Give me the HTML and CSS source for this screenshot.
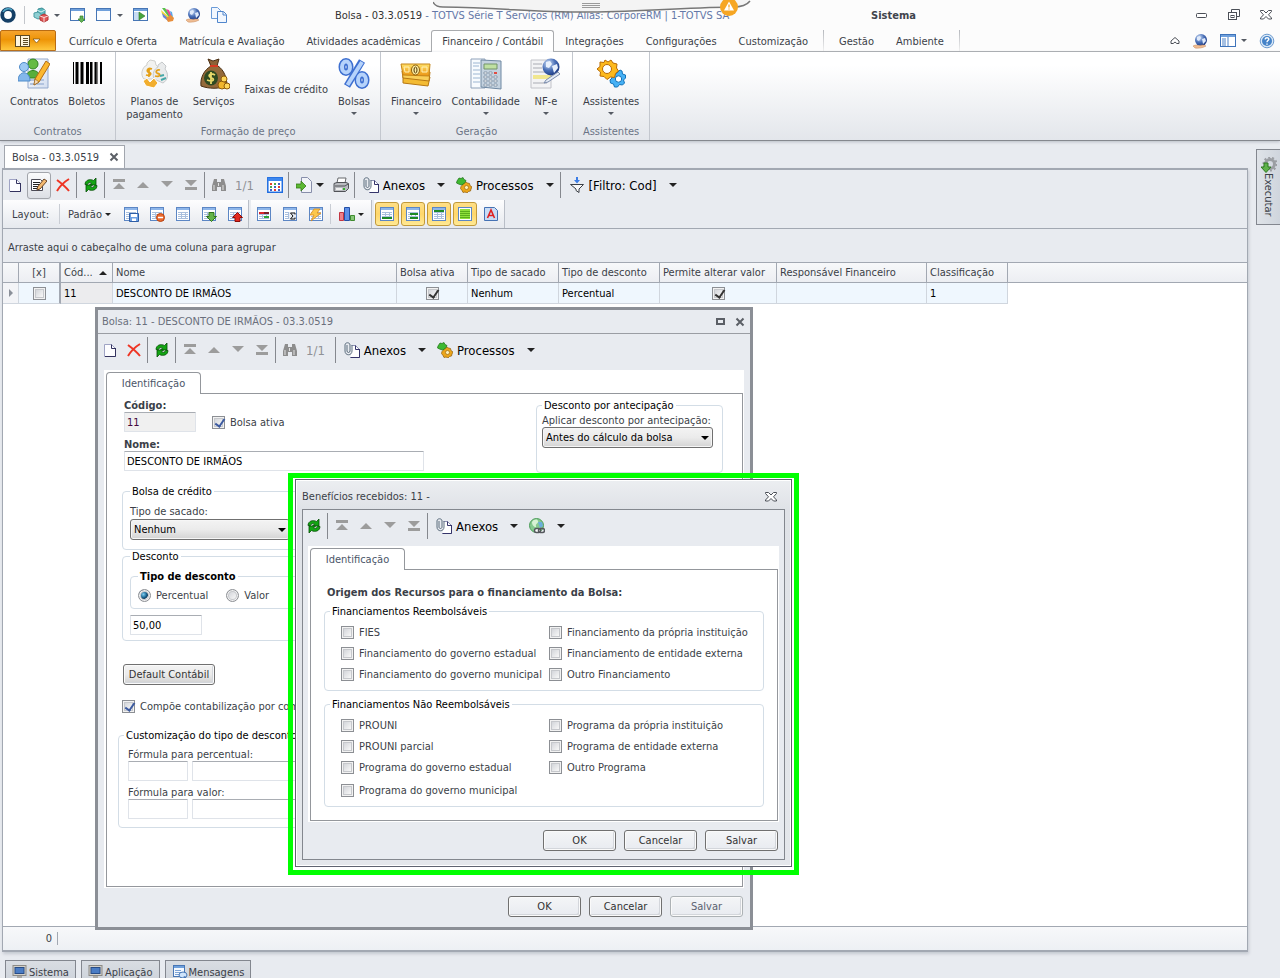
FILE: index.html
```html
<!DOCTYPE html>
<html lang="pt-BR">
<head>
    <meta charset="UTF-8">
    <meta name="viewport" content="width=device-width, initial-scale=1.0">
    <title>Bolsa - 03.3.0519</title>
    <link rel="stylesheet" href="styles.css">
</head>
<body>
    <!-- icon sprite -->
    <svg class="sprite" aria-hidden="true">
        <defs>
            <linearGradient id="g-blue" x1="0" y1="0" x2="0" y2="1"><stop offset="0" stop-color="#b9d4f7"/><stop offset="1" stop-color="#3d74cf"/></linearGradient>
            <linearGradient id="g-gold" x1="0" y1="0" x2="0" y2="1"><stop offset="0" stop-color="#ffe067"/><stop offset="1" stop-color="#eb9412"/></linearGradient>
            <linearGradient id="g-sheet" x1="0" y1="0" x2="1" y2="1"><stop offset="0" stop-color="#ffffff"/><stop offset="1" stop-color="#d3def0"/></linearGradient>
            <radialGradient id="g-globe" cx=".35" cy=".3" r=".8"><stop offset="0" stop-color="#d7e6fa"/><stop offset=".5" stop-color="#4a70b8"/><stop offset="1" stop-color="#142f78"/></radialGradient>
        </defs>
        <symbol id="i-logo" viewBox="0 0 16 16"><circle cx="8" cy="8" r="5.800" fill="#fff" stroke="#153f66" stroke-width="3.800"/><path d="M3 5a6 6 0 0 1 9-2" fill="none" stroke="#4fa5c4" stroke-width="1.600"/></symbol>
        <symbol id="i-cubes" viewBox="0 0 16 16"><path d="M5 2l4-1 3 2v4L8 9 4 7z" fill="#5bb7bd" stroke="#3d8e95"/><path d="M1 6l4-1 3 2v4l-3 1-4-2z" fill="#8fcfd2" stroke="#4a9ca2"/><path d="M7 9l4-2 4 2v4l-4 2-4-2z" fill="#e05656" stroke="#b63333"/><path d="M7 9l4 1.500L15 9M11 10.500V15M4 3l4 2 4-2" fill="none" stroke="#fff" stroke-width=".8"/></symbol>
        <symbol id="i-winadd" viewBox="0 0 16 16"><rect x=".5" y="1.500" width="14" height="12" fill="#fff" stroke="#4776b5"/><path d="M1 2h13v2H1z" fill="#6fa0dc"/><path d="M10 9h3v3h2l-3.500 3.500L8 12h2z" fill="#61b254" stroke="#35802c" stroke-width=".7"/></symbol>
        <symbol id="i-win" viewBox="0 0 16 16"><rect x=".5" y="1.500" width="14" height="12" fill="#fbfdff" stroke="#4776b5"/><path d="M1 2h13v2H1z" fill="#6fa0dc"/></symbol>
        <symbol id="i-wingo" viewBox="0 0 16 16"><rect x=".5" y="1.500" width="14" height="12" fill="#fff" stroke="#4776b5"/><path d="M1 2h13v2H1z" fill="#6fa0dc"/><path d="M1 5h5v8H1z" fill="#c7dcf3"/><path d="M6 5l6 4-6 4z" fill="#48a63f" stroke="#2b7625" stroke-width=".6"/></symbol>
        <symbol id="i-palette" viewBox="0 0 16 16"><path d="M3 1l3 0 7 9-2 2z" fill="#5ac04e"/><path d="M7 2l3 1 3 6-2 1z" fill="#e8479c"/><path d="M11 4l2 1 1 5-2-1z" fill="#57a8e6"/><path d="M2 3l9 8-2 2-6-6z" fill="#f6d736"/><path d="M3 6l7 6-1 2-5-4z" fill="#6b84d8"/><path d="M7 11l5-3 3 3-1 3-5 1z" fill="#e88e3a"/></symbol>
        <symbol id="i-globe" viewBox="0 0 16 16"><circle cx="9" cy="7" r="6" fill="url(#g-globe)"/><path d="M5 4l3-1 1 2-2 3-2-1zM10 6l3-1 1 3-3 3z" fill="#dfeafb"/><path d="M1 13c3-2 5 0 7-.5s4-1 6 .5c-3 2-8 2.500-11 2z" fill="#f0bd93" stroke="#c78a5d" stroke-width=".5"/></symbol>
        <symbol id="i-copy" viewBox="0 0 16 16"><path d="M.5.5h6l3 3v8h-9z" fill="#f2f7fe" stroke="#6a9bd8"/><path d="M6.500 4.500h6l3 3v8h-9z" fill="#f2f7fe" stroke="#5086cc"/><path d="M12 5v3h3" fill="none" stroke="#5086cc"/></symbol>
        <symbol id="i-panel" viewBox="0 0 16 14"><rect x=".5" y=".5" width="15" height="12" fill="#fff" stroke="#3e73ba"/><path d="M1 1h14v2H1z" fill="#6fa0dc"/><path d="M8 3v9M2 5h4M2 7h4M2 9h4M2 11h4" stroke="#4f82c6"/></symbol>
        <symbol id="i-help" viewBox="0 0 16 16"><circle cx="8" cy="8" r="6.800" fill="#dbe9f7" stroke="#6d9bcf"/><circle cx="8" cy="8" r="5" fill="#4583c8"/><path d="M6.200 6.500c0-2.500 3.800-2.200 3.600-.2C9.600 7.500 8 7.700 8 9.200M8 10.500v1.300" stroke="#fff" stroke-width="1.400" fill="none"/></symbol>
        <symbol id="i-min" viewBox="0 0 12 12"><rect x=".5" y="4.500" width="10" height="4" rx="1" fill="#fff" stroke="#4b4f57"/></symbol>
        <symbol id="i-restore" viewBox="0 0 12 12"><path d="M3.500 3.500v-3h8v7h-3" fill="#fff" stroke="#4b4f57"/><rect x=".5" y="3.500" width="8" height="7" fill="#fff" stroke="#4b4f57"/><rect x="3" y="6.500" width="3" height="2" fill="none" stroke="#4b4f57"/></symbol>
        <symbol id="i-close" viewBox="0 0 12 12"><path d="M.5 1.500h3L6 4l2.500-2.500h3v1L8.500 5.800l3 3.200v1h-3L6 7.500 3.500 10h-3V9l3-3.200-3-3.300z" fill="#fff" stroke="#4b4f57"/></symbol>
        <symbol id="i-x" viewBox="0 0 10 10"><path d="M1.500 1.500l7 7M8.500 1.500l-7 7" stroke="#5b5f66" stroke-width="2"/></symbol>
        <symbol id="i-max" viewBox="0 0 10 10"><rect x="1" y="2" width="7" height="5" fill="none" stroke="#5b5f66" stroke-width="2"/></symbol>
        <symbol id="i-up" viewBox="0 0 10 8"><path d="M1 4l4-3.500L9 4v2.500H6.800L5 5 3.200 6.500H1z" fill="#fff" stroke="#4b4f57"/></symbol>
        <symbol id="i-menu" viewBox="0 0 26 14"><rect x=".5" y="1.500" width="14" height="11" fill="#fff6dd" stroke="#5d4a24"/><path d="M5.500 2v10M8 4.500h5M8 6.500h5M8 8.500h5M8 10.500h5" stroke="#5d4a24"/><path d="M18 5h7l-3.500 4z" fill="#fff" stroke="#7a4d08" stroke-width=".7"/></symbol>

        <symbol id="i-contratos" viewBox="0 0 32 32"><path d="M10 1h20v29H10z" fill="url(#g-sheet)" stroke="#93a9cd"/><path d="M12 22h14M12 26h14" stroke="#b1c3df" stroke-width="2"/><circle cx="15" cy="6" r="5" fill="#65bb45" stroke="#2f8420"/><path d="M8 20c0-10 14-10 14 0z" fill="#58ae3b" stroke="#2f8420"/><circle cx="6" cy="9" r="4.500" fill="#9cc9f3" stroke="#4f8bc9"/><path d="M0 23c0-11 12-11 12 0z" fill="#83b7ec" stroke="#4f8bc9"/><path d="M28 3l4 3-11 18-5 3 1-6z" fill="#fbb72f" stroke="#b26c14"/><path d="M17 21l4 3-5 3z" fill="#f7dcb5" stroke="#8a5a1d" stroke-width=".6"/></symbol>
        <symbol id="i-barcode" viewBox="0 0 32 24"><path d="M2.500 0v22M21 0v22M26 0v22" stroke="#000"/><path d="M6 0v22M11 0v22M16.500 0v22" stroke="#000" stroke-width="3"/><path d="M20 0v22M24.500 0v22M30 0v22" stroke="#000" stroke-width="2"/></symbol>
        <symbol id="i-planos" viewBox="0 0 32 32"><path d="M9 5l3-3 5 1 1 4c5 4 5 11 2 14H6C2 17 4 9 9 7z" fill="#f2f2f0" stroke="#cfcfcc"/><path d="M20 7l4-3 4 4-1 3c4 5 3 11-2 14l-9-4c-2-5 0-10 4-12z" fill="#e9ebec" stroke="#c5c8ca"/><path d="M14 11c-5-2-6 3-3 3.500s2 4-3 2.500M11 10v9M22 12c-4-1-5 3-2 3.500s2 4-3 2.500" fill="none" stroke="#e5a017" stroke-width="1.800"/><path d="M5 23l4-3 3 4 4-4 4 5-4 5-8-2z" fill="#f2ae2e" stroke="#fff"/><path d="M22 18l4-1M23 22l5-2" stroke="#47a8a8" stroke-width="2"/></symbol>
        <symbol id="i-saco" viewBox="0 0 32 32"><path d="M10 1l5 2 6-2-2 7h-6z" fill="#8d6236" stroke="#4a2f14"/><path d="M13 8h7c6 4 9 12 9 20-8 3-18 3-26 0C2 20 6 12 13 8z" fill="#946a3a" stroke="#4a2f14"/><path d="M12 8h8" stroke="#d63a20" stroke-width="2"/><ellipse cx="13" cy="20" rx="7" ry="7.500" fill="#2f4a22"/><path d="M17 17c-5-3-8 1-4 2.500s3 5-4 2.500M13 14v12" fill="none" stroke="#e9d96a" stroke-width="1.800"/><circle cx="24" cy="27" r="4" fill="#f2b62c" stroke="#8f5c0a"/><circle cx="29" cy="28" r="3" fill="#ffd75a" stroke="#8f5c0a"/><circle cx="26" cy="21" r="3" fill="#ffd75a" stroke="#8f5c0a"/></symbol>
        <symbol id="i-percent" viewBox="0 0 32 32"><g fill="none" stroke="#3d6fd0" stroke-width="7"><ellipse cx="8" cy="9" rx="4" ry="5.500"/><ellipse cx="24" cy="22" rx="4" ry="5.500"/><path d="M24 3L9 28"/></g><g fill="none" stroke="#b6d3fb" stroke-width="4"><ellipse cx="8" cy="9" rx="4" ry="5.500"/><ellipse cx="24" cy="22" rx="4" ry="5.500"/><path d="M24 4L9.500 27"/></g></symbol>
        <symbol id="i-notas" viewBox="0 0 32 32"><path d="M3 18l27 1-2 9-25-3z" fill="#f3bb33" stroke="#b77813"/><path d="M2 13l28 1-1 9-26-3z" fill="#f9cf58" stroke="#b77813"/><path d="M1 6h29l-1 12-26-1z" fill="url(#g-gold)" stroke="#c58518"/><ellipse cx="15.500" cy="12" rx="4" ry="5" fill="#ffefa1" stroke="#8e5f0c"/><ellipse cx="15.500" cy="12" rx="1.500" ry="3" fill="none" stroke="#4e350a"/><path d="M4 9h5v5H5zM22 9h5v5h-5z" fill="none" stroke="#fff1b5"/></symbol>
        <symbol id="i-calc" viewBox="0 0 32 32"><path d="M1 1h14v29H1z" fill="#f8fbfe" stroke="#8fa2ba"/><path d="M3 5h7M3 8h6M3 12h7M3 16h7M3 20h7M3 24h7" stroke="#9db6d2"/><path d="M11 2l20 1v28l-20-2z" fill="#c4d2df" stroke="#6f88a2"/><path d="M14 6h13v5H14z" fill="#bfe0a2" stroke="#73936a"/><g fill="#fff" stroke="#6e8297" stroke-width=".7"><path d="M14 14h3v2h-3zM19 14h3v2h-3zM14 18h3v2h-3zM19 18h3v2h-3zM24 18h3v2h-3zM14 22h3v2h-3zM19 22h3v2h-3zM24 22h3v2h-3zM14 26h3v2h-3zM19 26h3v2h-3zM24 26h3v2h-3z"/></g><path d="M24 14h3v2h-3z" fill="#e04c42"/></symbol>
        <symbol id="i-nfe" viewBox="0 0 32 32"><path d="M1 2h20v28H1z" fill="#f3f3f5" stroke="#c1c2c8"/><path d="M3 6h9M3 10h9M3 14h14M3 25h14" stroke="#a9abb3"/><path d="M3 17h18v4H3z" fill="#f1e790"/><circle cx="21" cy="9" r="8.500" fill="url(#g-globe)"/><path d="M16 4l4-1 2 3-3 4-3-1zM22 8l5-2 1 4-4 5z" fill="#e8f0fc"/><path d="M30 16l-12 8-4 1 2-3 12-8z" fill="#e6ecf5" stroke="#7b8cad"/></symbol>
        <symbol id="i-gears" viewBox="0 0 32 32"><path d="M23 14l2-2 2 1 .5 3 3 1v3l-2 2 1 3-2 2-3-.5-2 2.500h-3l-1-3-3-1-.5-3 2-2v-3l3-.5z" fill="#46b1f5" stroke="#1272b8"/><circle cx="23.500" cy="21" r="3.200" fill="#fff" stroke="#1272b8"/><path d="M10 2l3 2 3-2 2 3 4 1-.5 4 2 3-3 2.500-1 4-4-.5-3.500 2.500-3-3-4-.5.500-4-3.500-3 3-2.500L5 4l4 .5z" fill="#fdb91c" stroke="#b86a05"/><ellipse cx="12" cy="11" rx="4.500" ry="4.500" fill="#fff" stroke="#b86a05"/></symbol>

        <symbol id="i-doc" viewBox="0 0 16 16"><path d="M2.500 2.500h7l4 4v8h-11z" fill="#fdfdff" stroke="#9fa3c4"/><path d="M13.500 6v8.500H3M9.500 2.500v4h4" fill="none" stroke="#33325e"/></symbol>
        <symbol id="i-edit" viewBox="0 0 16 16"><path d="M.5 2.500h9l2 2v9H.5z" fill="#fff" stroke="#4a4a55"/><path d="M2 5.500h7M2 7.500h6M2 9.500h5M2 11.500h4" stroke="#222"/><path d="M13 2l3 2-7 8-3 1 .5-3z" fill="#f5b96f" stroke="#6a4524"/></symbol>
        <symbol id="i-del" viewBox="0 0 16 16"><path d="M2 3c4 3 8 6 12 11M14 2C9 5 5 9 2 14" fill="none" stroke="#ee3524" stroke-width="2"/></symbol>
        <symbol id="i-refresh" viewBox="0 0 16 16"><path d="M2 7.500C2 3 7 1.500 10.500 3.500L13 1v7H6.500l2-2C6.500 5 5 6 4.500 7.500z" fill="#12a512" stroke="#064f06" stroke-width=".8"/><path d="M14 8.500c0 4.500-5 6-8.500 4L3 15V8h6.500l-2 2c2 1 3.500 0 4-1.500z" fill="#12a512" stroke="#064f06" stroke-width=".8"/></symbol>
        <symbol id="i-first" viewBox="0 0 16 16"><path d="M2 2h12v3H2zM8 6l6 6H2z" fill="#9c9c9c"/></symbol>
        <symbol id="i-prev" viewBox="0 0 16 16"><path d="M8 5l6 6H2z" fill="#9c9c9c"/></symbol>
        <symbol id="i-next" viewBox="0 0 16 16"><path d="M8 10L2 4h12z" fill="#9c9c9c"/></symbol>
        <symbol id="i-last" viewBox="0 0 16 16"><path d="M2 10h12v3H2zM8 9L2 3h12z" fill="#9c9c9c"/></symbol>
        <symbol id="i-bino" viewBox="0 0 16 16"><path d="M3 2h3v3h4V2h3l2 7v5h-5v-4H6v4H1V9z" fill="#8d8d8d"/><path d="M3 8v5M12 8v5M7.500 6v3" stroke="#e2e2e2"/></symbol>
        <symbol id="i-cal" viewBox="0 0 16 16"><rect x=".8" y=".8" width="14.500" height="14.500" fill="#fff" stroke="#1e6ce0" stroke-width="1.500"/><path d="M1 1h14v3H1z" fill="#3d88f0"/><path d="M3 6h2v2H3zM11 9h2v2h-2zM7 12h2v2H7z" fill="#e33e2e"/><path d="M7 6h2v2H7zM3 9h2v2H3z" fill="#4aa84a"/><path d="M11 6h2v2h-2zM7 9h2v2H7zM3 12h2v2H3zM11 12h2v2h-2z" fill="#3a62c8"/></symbol>
        <symbol id="i-export" viewBox="0 0 16 16"><path d="M5.500.5h6l4 4v11h-10z" fill="#f1f3f8" stroke="#878eaa"/><path d="M0 7h5V4l5 5-5 5v-3H0z" fill="#5cb833" stroke="#347a18" stroke-width=".8"/></symbol>
        <symbol id="i-print" viewBox="0 0 16 16"><path d="M5 1h8l-1 5H4z" fill="#fff" stroke="#66686c"/><path d="M1 6.500l3-1h9l2.500 1v5l-3 3H1z" fill="#b9bbc0" stroke="#505257"/><path d="M2 9h10l3-2" fill="none" stroke="#505257"/><path d="M3 11h6v2H3z" fill="#eee"/><path d="M10 11h2v2h-2z" fill="#36b02e"/></symbol>
        <symbol id="i-clip" viewBox="0 0 16 16"><path d="M7.500 3.500h4l4 4v8h-9" fill="#fff" stroke="#8d90b3"/><path d="M15.500 7v8.500h-9M11.500 3.500v4h4" fill="none" stroke="#35346a"/><path d="M3 3v6c0 2 3 2 3 0V3c0-3-5-3-5 0v6c0 5 7 5 7 0V3" fill="none" stroke="#5b6c7d"/></symbol>
        <symbol id="i-proc" viewBox="0 0 16 16"><path d="M8 6l2-1 1.500 1 2 .5.500 2 2 1.500-1 2-.5 2-2 .5-1.500 1.500-2-1-2 .500-1-2-1.500-2 .5-2 1-1z" fill="#eba51b" stroke="#8f5b08" stroke-width=".7"/><circle cx="10.500" cy="10.500" r="2" fill="#fff0b8" stroke="#8f5b08" stroke-width=".6"/><path d="M3 1l2 .500 2-1 1 2 2 1-1 2-1.500 1.500-2 1L2.500 7 .5 6l.5-2z" fill="#3fb932" stroke="#1b6f13" stroke-width=".7"/></symbol>
        <symbol id="i-filter" viewBox="0 0 16 16"><path d="M1.500 7.500h13L10 12v3.500L7 13.500V12z" fill="#f7f7f7" stroke="#3b3f46"/><path d="M7 0h2v3h2L8 6.500 5 3h2z" fill="#3c7de6"/></symbol>
        <symbol id="i-link" viewBox="0 0 16 16"><circle cx="7.500" cy="7.500" r="7" fill="#86c98f" stroke="#4c9c5a"/><path d="M3 4c2-3 5-3 6-1s-3 3-2 5-4 1-4-4z" fill="#d7f2d4"/><path d="M9 4l4 0 1 4-3 2z" fill="#6aaedd"/><rect x="5.500" y="10.500" width="6" height="4" rx="2" fill="#fff" stroke="#55585d" stroke-width="1.500"/><rect x="9.500" y="10.500" width="6" height="4" rx="2" fill="none" stroke="#55585d" stroke-width="1.500"/></symbol>

        <symbol id="i-grid" viewBox="0 0 16 16"><rect x="1.500" y="1.500" width="13" height="13" fill="#fff" stroke="#5c86c4"/><path d="M2 2h12v2H2z" fill="#8eb6ea"/><path d="M3 6.500h10M3 8.500h10M3 10.500h10M3 12.500h10M6.500 6v7M10.500 6v7" stroke="#a9bfdd"/></symbol>
        <symbol id="i-gsave" viewBox="0 0 16 16"><use href="#i-grid"/><path d="M6.500 7.500h9v8h-9z" fill="#6d9fe2" stroke="#2d5da6"/><path d="M8 8h6v3H8zM9 12.500h4V15H9z" fill="#fff"/></symbol>
        <symbol id="i-gdel" viewBox="0 0 16 16"><use href="#i-grid"/><circle cx="11.500" cy="11.500" r="4" fill="#ec6a2e" stroke="#b8430f"/><path d="M9 11.500h5" stroke="#fff" stroke-width="1.500"/></symbol>
        <symbol id="i-gdown" viewBox="0 0 16 16"><use href="#i-grid"/><path d="M8 6.500h5v4h2.500l-5 5-5-5H8z" fill="#64b44a" stroke="#2c721a"/></symbol>
        <symbol id="i-gup" viewBox="0 0 16 16"><use href="#i-grid"/><path d="M8 15.500h5v-4h2.500l-5-5-5 5H8z" fill="#e22a20" stroke="#8d0d08"/></symbol>
        <symbol id="i-gcond" viewBox="0 0 16 16"><use href="#i-grid"/><path d="M3 7h5" stroke="#d8242a" stroke-width="2"/><path d="M8 7h5" stroke="#7a1f28" stroke-width="2"/><path d="M8 11h5" stroke="#2aa335" stroke-width="2"/></symbol>
        <symbol id="i-gsum" viewBox="0 0 16 16"><use href="#i-grid"/><path d="M7 6h7v8H7z" fill="#e8edf4"/><path d="M13 8.500V7H8.500L11 10l-2.500 3H13v-1.500" fill="none" stroke="#111"/></symbol>
        <symbol id="i-gflash" viewBox="0 0 16 16"><use href="#i-grid"/><path d="M6 3h6L9 7h4L3 15l3-6H2z" fill="#fcc84d" stroke="#d98a1b" stroke-width=".8"/></symbol>
        <symbol id="i-chart" viewBox="0 0 16 16"><path d="M.5 6.500h4v8h-4z" fill="#ef8089" stroke="#c23541"/><path d="M5.500 1.500h5v13h-5z" fill="#5d8fe8" stroke="#234fa5"/><path d="M11.500 9.500h4v5h-4z" fill="#86c878" stroke="#3e8a2f"/></symbol>
        <symbol id="i-gfoot" viewBox="0 0 16 16"><use href="#i-grid"/><path d="M3 12h10" stroke="#1c8a26" stroke-width="2"/></symbol>
        <symbol id="i-ggroup" viewBox="0 0 16 16"><use href="#i-grid"/><path d="M5 8h8M5 12h8" stroke="#1c8a26" stroke-width="2"/></symbol>
        <symbol id="i-ghead" viewBox="0 0 16 16"><use href="#i-grid"/><path d="M3 5h10" stroke="#1c8a26" stroke-width="2"/></symbol>
        <symbol id="i-gall" viewBox="0 0 16 16"><rect x="1.500" y="1.500" width="13" height="13" fill="#fff" stroke="#5c86c4"/><path d="M3 3h10v10H3z" fill="#8ee03a"/><path d="M3 5.500h10M3 7.500h10M3 9.500h10M3 11.500h10" stroke="#5cae1c"/></symbol>
        <symbol id="i-font" viewBox="0 0 16 16"><path d="M1.500 1.500h10l3 3v10h-13z" fill="#c8dcf6" stroke="#4572b4"/><path d="M4.500 12L8 4l3.500 8M5.500 9.500h5" fill="none" stroke="#df2020" stroke-width="1.600"/></symbol>

        <symbol id="i-exec" viewBox="0 0 16 16"><circle cx="9" cy="7" r="4.500" fill="none" stroke="#9b9ea3" stroke-width="3"/><circle cx="9" cy="7" r="6.500" fill="none" stroke="#9b9ea3" stroke-width="2" stroke-dasharray="2 2"/><path d="M3 6h4v4h3l-5 5.500L0 10h3z" fill="#5fb24a" stroke="#2f7a20"/></symbol>
        <symbol id="i-monitor" viewBox="0 0 16 16"><rect x="1" y="1.500" width="13" height="10" fill="#d3d0c8" stroke="#8b8a86"/><rect x="3" y="3.500" width="9" height="6" fill="#4a7cc4" stroke="#284c86"/><path d="M5 12h5v2h2v1H3v-1h2z" fill="#a9a8a4"/></symbol>
        <symbol id="i-msg" viewBox="0 0 16 16"><rect x="1.500" y="1.500" width="11" height="11" fill="#f4f9ff" stroke="#4776b5"/><path d="M2 2h10v2H2z" fill="#6fa0dc"/><path d="M3 6.500h6M3 8.500h6M3 10.500h4" stroke="#7ea4d6"/><ellipse cx="11" cy="11" rx="4" ry="3" fill="#cfe4fb" stroke="#4776b5"/><path d="M11 13l4 2-2-3z" fill="#4776b5"/></symbol>
        <symbol id="i-warn" viewBox="0 0 20 20"><circle cx="10" cy="10" r="9" fill="#f6a623"/><path d="M10 4.500l5 9H5z" fill="#fff"/><path d="M10 7.500v3M10 11.500v1" stroke="#f6a623" stroke-width="1.300"/></symbol>
    </svg>

    <header class="titlebar">
        <div class="quick">
            <svg class="icon"><use href="#i-logo"/></svg>
            <span class="quick-sep"></span>
            <button class="quick-btn drop" aria-label="Módulos"><svg class="icon"><use href="#i-cubes"/></svg></button>
            <button class="quick-btn" aria-label="Nova janela"><svg class="icon"><use href="#i-winadd"/></svg></button>
            <button class="quick-btn drop" aria-label="Janelas"><svg class="icon"><use href="#i-win"/></svg></button>
            <button class="quick-btn" aria-label="Abrir"><svg class="icon"><use href="#i-wingo"/></svg></button>
            <button class="quick-btn" aria-label="Cores"><svg class="icon"><use href="#i-palette"/></svg></button>
            <button class="quick-btn" aria-label="Internet"><svg class="icon"><use href="#i-globe"/></svg></button>
            <button class="quick-btn" aria-label="Copiar"><svg class="icon"><use href="#i-copy"/></svg></button>
        </div>
        <h1 class="app-title">Bolsa - 03.3.0519 <span>- TOTVS Série T Serviços (RM) Alias: CorporeRM | 1-TOTVS SA</span></h1>
        <strong class="context-title">Sistema</strong>
        <div class="window-buttons">
            <button aria-label="Minimizar"><svg class="icon-12"><use href="#i-min"/></svg></button>
            <button aria-label="Restaurar"><svg class="icon-12"><use href="#i-restore"/></svg></button>
            <button aria-label="Fechar"><svg class="icon-12"><use href="#i-close"/></svg></button>
        </div>
        <!-- pull-down handle over the title -->
        <div class="notch">
            <svg class="notch-shape" viewBox="0 0 318 14"><path d="M0 0c2 5 5 6 10 6 60 1 90 6 140 6s90-4 150-6c8 0 14-2 17-6z" fill="#f4f4f4"/><path d="M0 2c2 4 5 5 10 5 60 1 90 5 140 5s90-4 150-5c8 0 14-2 17-6" fill="none" stroke="#777" stroke-width="1.500"/><path d="M149 3.500h18M149 5.500h18M149 7.500h18" stroke="#9a9a9a"/></svg>
            <svg class="notch-warn"><use href="#i-warn"/></svg>
        </div>
    </header>

    <nav class="tabs">
        <button class="app-menu" aria-label="Menu"><svg><use href="#i-menu"/></svg></button>
        <a href="#">Currículo e Oferta</a>
        <a href="#">Matrícula e Avaliação</a>
        <a href="#">Atividades acadêmicas</a>
        <a href="#" class="active">Financeiro / Contábil</a>
        <a href="#">Integrações</a>
        <a href="#">Configurações</a>
        <a href="#">Customização</a>
        <span class="tab-sep"></span>
        <a href="#">Gestão</a>
        <a href="#">Ambiente</a>
        <span class="tab-sep"></span>
        <div class="tab-tools">
            <button aria-label="Recolher"><svg class="icon-up"><use href="#i-up"/></svg></button>
            <button aria-label="Internet"><svg class="icon"><use href="#i-globe"/></svg></button>
            <button class="drop" aria-label="Painel"><svg class="icon"><use href="#i-panel"/></svg></button>
            <button aria-label="Ajuda"><svg class="icon"><use href="#i-help"/></svg></button>
        </div>
    </nav>

    <section class="ribbon">
        <div class="group">
            <div class="group-items">
                <button><svg><use href="#i-contratos"/></svg>Contratos</button>
                <button><svg><use href="#i-barcode"/></svg>Boletos</button>
            </div>
            <p>Contratos</p>
        </div>
        <div class="group">
            <div class="group-items">
                <button><svg><use href="#i-planos"/></svg>Planos de<br>pagamento</button>
                <button><svg><use href="#i-saco"/></svg>Serviços</button>
                <button class="text-only">Faixas de crédito</button>
                <button class="menu"><svg><use href="#i-percent"/></svg>Bolsas</button>
            </div>
            <p>Formação de preço</p>
        </div>
        <div class="group">
            <div class="group-items">
                <button class="menu"><svg><use href="#i-notas"/></svg>Financeiro</button>
                <button class="menu"><svg><use href="#i-calc"/></svg>Contabilidade</button>
                <button class="menu"><svg><use href="#i-nfe"/></svg>NF-e</button>
            </div>
            <p>Geração</p>
        </div>
        <div class="group">
            <div class="group-items">
                <button class="menu"><svg><use href="#i-gears"/></svg>Assistentes</button>
            </div>
            <p>Assistentes</p>
        </div>
    </section>

    <div class="desktop">
        <div class="main-col">
            <div class="doc-tabs">
                <div class="doc-tab">Bolsa - 03.3.0519 <button aria-label="Fechar aba"><svg class="icon-10"><use href="#i-x"/></svg></button></div>
            </div>
            <main class="workspace">
                <div class="toolbar">
                    <button aria-label="Novo"><svg class="icon"><use href="#i-doc"/></svg></button>
                    <button class="pressed" aria-label="Editar"><svg class="icon"><use href="#i-edit"/></svg></button>
                    <button aria-label="Excluir"><svg class="icon"><use href="#i-del"/></svg></button>
                    <span class="sep"></span>
                    <button aria-label="Atualizar"><svg class="icon"><use href="#i-refresh"/></svg></button>
                    <span class="sep"></span>
                    <button aria-label="Primeiro"><svg class="icon"><use href="#i-first"/></svg></button>
                    <button aria-label="Anterior"><svg class="icon"><use href="#i-prev"/></svg></button>
                    <button aria-label="Próximo"><svg class="icon"><use href="#i-next"/></svg></button>
                    <button aria-label="Último"><svg class="icon"><use href="#i-last"/></svg></button>
                    <span class="sep"></span>
                    <button aria-label="Localizar"><svg class="icon"><use href="#i-bino"/></svg></button>
                    <span class="counter">1/1</span>
                    <button aria-label="Calendário"><svg class="icon"><use href="#i-cal"/></svg></button>
                    <span class="sep"></span>
                    <button class="wide drop-lg tight" aria-label="Exportar"><svg class="icon"><use href="#i-export"/></svg></button>
                    <button aria-label="Imprimir"><svg class="icon"><use href="#i-print"/></svg></button>
                    <span class="sep"></span>
                    <button class="wide drop-lg"><svg class="icon"><use href="#i-clip"/></svg>Anexos</button>
                    <button class="wide drop-lg"><svg class="icon"><use href="#i-proc"/></svg>Processos</button>
                    <span class="sep"></span>
                    <button class="wide drop-lg"><svg class="icon"><use href="#i-filter"/></svg>[Filtro: Cod]</button>
                </div>
                <div class="layout-bar">
                    <div class="bar-group">
                        <span class="bar-label">Layout:</span>
                        <span class="bar-sep"></span>
                        <button class="bar-text drop">Padrão</button>
                        <button aria-label="Salvar layout"><svg class="icon"><use href="#i-gsave"/></svg></button>
                        <button aria-label="Excluir layout"><svg class="icon"><use href="#i-gdel"/></svg></button>
                        <button aria-label="Layout padrão"><svg class="icon"><use href="#i-grid"/></svg></button>
                        <button aria-label="Importar layout"><svg class="icon"><use href="#i-gdown"/></svg></button>
                        <button aria-label="Exportar layout"><svg class="icon"><use href="#i-gup"/></svg></button>
                    </div>
                    <div class="bar-group">
                        <button aria-label="Formatação"><svg class="icon"><use href="#i-gcond"/></svg></button>
                        <button aria-label="Somatório"><svg class="icon"><use href="#i-gsum"/></svg></button>
                        <button aria-label="Consulta rápida"><svg class="icon"><use href="#i-gflash"/></svg></button>
                        <span class="bar-sep"></span>
                        <button class="bar-text drop" aria-label="Gráfico"><svg class="icon"><use href="#i-chart"/></svg></button>
                    </div>
                    <div class="bar-group">
                        <button class="on" aria-label="Rodapé"><svg class="icon"><use href="#i-gfoot"/></svg></button>
                        <button class="on" aria-label="Rodapé do grupo"><svg class="icon"><use href="#i-ggroup"/></svg></button>
                        <button class="on" aria-label="Cabeçalho"><svg class="icon"><use href="#i-ghead"/></svg></button>
                        <button class="on" aria-label="Zebrado"><svg class="icon"><use href="#i-gall"/></svg></button>
                        <button aria-label="Fonte"><svg class="icon"><use href="#i-font"/></svg></button>
                    </div>
                </div>
                <div class="group-panel">Arraste aqui o cabeçalho de uma coluna para agrupar</div>
                <table class="grid">
                    <colgroup>
                        <col class="c-mark"><col class="c-sel"><col class="c-cod"><col class="c-nome"><col class="c-ativa"><col class="c-sacado"><col class="c-desc"><col class="c-permite"><col class="c-resp"><col class="c-class"><col>
                    </colgroup>
                    <thead>
                        <tr>
                            <th></th>
                            <th class="center frozen">[x]</th>
                            <th><span class="sorted">Cód...</span></th>
                            <th>Nome</th>
                            <th>Bolsa ativa</th>
                            <th>Tipo de sacado</th>
                            <th>Tipo de desconto</th>
                            <th>Permite alterar valor</th>
                            <th>Responsável Financeiro</th>
                            <th>Classificação</th>
                            <th class="rest"></th>
                        </tr>
                    </thead>
                    <tbody>
                        <tr>
                            <td class="mark"><span class="row-mark"></span></td>
                            <td class="center frozen"><input type="checkbox" aria-label="Selecionar"></td>
                            <td class="cod">11</td>
                            <td>DESCONTO DE IRMÃOS</td>
                            <td class="center"><input type="checkbox" class="dark" aria-label="Bolsa ativa" checked></td>
                            <td>Nenhum</td>
                            <td>Percentual</td>
                            <td class="center"><input type="checkbox" class="dark" aria-label="Permite alterar valor" checked></td>
                            <td></td>
                            <td>1</td>
                            <td class="rest"></td>
                        </tr>
                    </tbody>
                </table>
                <div class="grid-empty"></div>
                <footer class="grid-footer"><span>0</span></footer>
            </main>
        </div>
        <aside class="dock"><button><svg class="icon"><use href="#i-exec"/></svg><span>Executar</span></button></aside>
    </div>

    <nav class="bottom-tabs">
        <button><svg class="icon"><use href="#i-monitor"/></svg>Sistema</button>
        <button><svg class="icon"><use href="#i-monitor"/></svg>Aplicação</button>
        <button><svg class="icon"><use href="#i-msg"/></svg>Mensagens</button>
    </nav>

    <!-- janela de edição da bolsa -->
    <section class="window window-bolsa">
        <header class="window-title">
            <h2>Bolsa: 11 - DESCONTO DE IRMÃOS - 03.3.0519</h2>
            <button aria-label="Maximizar"><svg class="icon-10"><use href="#i-max"/></svg></button>
            <button aria-label="Fechar"><svg class="icon-10"><use href="#i-x"/></svg></button>
        </header>
        <div class="toolbar">
            <button aria-label="Novo"><svg class="icon"><use href="#i-doc"/></svg></button>
            <button aria-label="Excluir"><svg class="icon"><use href="#i-del"/></svg></button>
            <span class="sep"></span>
            <button aria-label="Atualizar"><svg class="icon"><use href="#i-refresh"/></svg></button>
            <span class="sep"></span>
            <button aria-label="Primeiro"><svg class="icon"><use href="#i-first"/></svg></button>
            <button aria-label="Anterior"><svg class="icon"><use href="#i-prev"/></svg></button>
            <button aria-label="Próximo"><svg class="icon"><use href="#i-next"/></svg></button>
            <button aria-label="Último"><svg class="icon"><use href="#i-last"/></svg></button>
            <span class="sep"></span>
            <button aria-label="Localizar"><svg class="icon"><use href="#i-bino"/></svg></button>
            <span class="counter">1/1</span>
            <span class="sep"></span>
            <button class="wide drop-lg"><svg class="icon"><use href="#i-clip"/></svg>Anexos</button>
            <button class="wide drop-lg"><svg class="icon"><use href="#i-proc"/></svg>Processos</button>
        </div>
        <div class="tab-area">
            <div class="tab-strip"><button class="page-tab">Identificação</button></div>
            <form class="page page-bolsa">
                <div class="top-row">
                    <div class="ident">
                        <div class="ident-row">
                            <div class="field">
                                <label class="bold" for="codigo">Código:</label>
                                <input type="text" id="codigo" class="short" value="11" readonly>
                            </div>
                            <label class="check"><input type="checkbox" checked>Bolsa ativa</label>
                        </div>
                        <div class="field">
                            <label class="bold" for="nome">Nome:</label>
                            <input type="text" id="nome" value="DESCONTO DE IRMÃOS">
                        </div>
                    </div>
                    <fieldset class="antecipacao">
                        <legend>Desconto por antecipação</legend>
                        <label for="antecipa">Aplicar desconto por antecipação:</label>
                        <div class="select"><select id="antecipa"><option>Antes do cálculo da bolsa</option></select></div>
                    </fieldset>
                </div>
                <fieldset class="credito">
                    <legend>Bolsa de crédito</legend>
                    <label for="sacado">Tipo de sacado:</label>
                    <div class="select"><select id="sacado"><option>Nenhum</option></select></div>
                </fieldset>
                <fieldset class="desconto">
                    <legend>Desconto</legend>
                    <fieldset class="tipo">
                        <legend class="bold">Tipo de desconto</legend>
                        <label class="check"><input type="radio" name="tipo" checked>Percentual</label>
                        <label class="check"><input type="radio" name="tipo">Valor</label>
                    </fieldset>
                    <input type="text" class="short" aria-label="Desconto" value="50,00">
                </fieldset>
                <button type="button" class="push gray">Default Contábil</button>
                <label class="check compoe"><input type="checkbox" checked>Compõe contabilização por competência</label>
                <fieldset class="custom">
                    <legend>Customização do tipo de desconto por fórmula</legend>
                    <label for="f-perc">Fórmula para percentual:</label>
                    <div class="pair"><input type="text" id="f-perc"><input type="text" aria-label="Descrição da fórmula para percentual"></div>
                    <label for="f-valor">Fórmula para valor:</label>
                    <div class="pair"><input type="text" id="f-valor"><input type="text" aria-label="Descrição da fórmula para valor"></div>
                </fieldset>
            </form>
        </div>
        <div class="actions">
            <button class="push">OK</button>
            <button class="push">Cancelar</button>
            <button class="push" disabled>Salvar</button>
        </div>
    </section>

    <!-- janela de benefícios, com moldura de destaque -->
    <div class="highlight">
        <section class="window window-benef">
            <header class="window-title">
                <h2>Benefícios recebidos: 11 -</h2>
                <button aria-label="Fechar"><svg class="icon-12"><use href="#i-close"/></svg></button>
            </header>
            <div class="window-body">
                <div class="toolbar">
                    <button aria-label="Atualizar"><svg class="icon"><use href="#i-refresh"/></svg></button>
                    <span class="sep"></span>
                    <button aria-label="Primeiro"><svg class="icon"><use href="#i-first"/></svg></button>
                    <button aria-label="Anterior"><svg class="icon"><use href="#i-prev"/></svg></button>
                    <button aria-label="Próximo"><svg class="icon"><use href="#i-next"/></svg></button>
                    <button aria-label="Último"><svg class="icon"><use href="#i-last"/></svg></button>
                    <span class="sep"></span>
                    <button class="wide drop-lg"><svg class="icon"><use href="#i-clip"/></svg>Anexos</button>
                    <button class="wide drop-lg" aria-label="Links"><svg class="icon"><use href="#i-link"/></svg></button>
                </div>
                <div class="tab-area">
                    <div class="tab-strip"><button class="page-tab">Identificação</button></div>
                    <form class="page page-benef">
                        <h3>Origem dos Recursos para o financiamento da Bolsa:</h3>
                        <fieldset class="checks">
                            <legend>Financiamentos Reembolsáveis</legend>
                            <label class="check"><input type="checkbox">FIES</label>
                            <label class="check"><input type="checkbox">Financiamento da própria instituição</label>
                            <label class="check"><input type="checkbox">Financiamento do governo estadual</label>
                            <label class="check"><input type="checkbox">Financiamento de entidade externa</label>
                            <label class="check"><input type="checkbox">Financiamento do governo municipal</label>
                            <label class="check"><input type="checkbox">Outro Financiamento</label>
                        </fieldset>
                        <fieldset class="checks">
                            <legend>Financiamentos Não Reembolsáveis</legend>
                            <label class="check"><input type="checkbox">PROUNI</label>
                            <label class="check"><input type="checkbox">Programa da própria instituição</label>
                            <label class="check"><input type="checkbox">PROUNI parcial</label>
                            <label class="check"><input type="checkbox">Programa de entidade externa</label>
                            <label class="check"><input type="checkbox">Programa do governo estadual</label>
                            <label class="check"><input type="checkbox">Outro Programa</label>
                            <label class="check"><input type="checkbox">Programa do governo municipal</label>
                        </fieldset>
                    </form>
                </div>
                <div class="actions">
                    <button class="push">OK</button>
                    <button class="push">Cancelar</button>
                    <button class="push">Salvar</button>
                </div>
            </div>
        </section>
    </div>
</body>
</html>
```

FILE: styles.css
```css
* {
    box-sizing: border-box;
}
body {
    margin: 0;
    height: 100vh;
    overflow: hidden;
    position: relative;
    display: flex;
    flex-direction: column;
    background: #e8ebf0;
    color: #3b3f48;
    font-family: "DejaVu Sans Condensed", "DejaVu Sans", sans-serif;
    font-size: 11px;
    line-height: 13px;
}
button, input, select {
    font: inherit;
    color: inherit;
}
button {
    display: flex;
    align-items: center;
    justify-content: center;
    padding: 0;
    border: none;
    background: none;
    white-space: nowrap;
}
h1, h2, h3, p {
    margin: 0;
    font-size: 11px;
    font-weight: normal;
}
a {
    color: inherit;
    text-decoration: none;
}
.sprite {
    position: absolute;
    width: 0;
    height: 0;
}
.icon {
    width: 16px;
    height: 16px;
    flex: none;
}
.icon-12 {
    width: 12px;
    height: 12px;
}
.icon-10 {
    width: 10px;
    height: 10px;
}
.icon-up {
    width: 10px;
    height: 8px;
}
/* small drop-down arrows */
.drop::after, .menu::after {
    content: "";
    border: 3px solid transparent;
    border-top-color: #555a63;
    border-bottom: none;
}
.drop::after {
    margin-left: 5px;
}
.drop-lg::after {
    content: "";
    margin-left: 8px;
    border: 4px solid transparent;
    border-top-color: #222;
    border-bottom: none;
}

/* title bar */
.titlebar {
    position: relative;
    display: grid;
    grid-template-columns: 335px 493px 131px 1fr;
    align-items: center;
    height: 30px;
    flex: none;
    background: #fcfcfc;
}
.quick {
    display: flex;
    align-items: center;
    gap: 10px;
}
.quick-sep {
    width: 1px;
    height: 18px;
    margin: 0 -2px;
    background: #c3c6cb;
}
.app-title {
    color: #333;
    white-space: nowrap;
}
.app-title span {
    color: #6478a8;
}
.context-title {
    text-align: center;
    color: #40444c;
}
.window-buttons {
    display: flex;
    justify-content: flex-end;
    gap: 20px;
    padding-right: 8px;
}
.notch {
    position: absolute;
    left: 433px;
    top: 0;
    width: 318px;
}
.notch-shape {
    display: block;
    width: 318px;
    height: 14px;
}
.notch-warn {
    position: absolute;
    right: 12px;
    top: -3px;
    width: 20px;
    height: 20px;
}

/* ribbon tabs */
.tabs {
    display: flex;
    height: 22px;
    flex: none;
    background: #fcfcfc;
    border-bottom: 1px solid #a9abae;
}
.tabs a {
    padding: 5px 11px 0;
    white-space: nowrap;
}
.tabs a.active {
    height: 22px;
    padding: 4px 10px 0;
    border: 1px solid #a9abae;
    border-bottom: none;
    border-radius: 3px 3px 0 0;
    background: #fff;
}
.app-menu {
    width: 56px;
    margin-right: 2px;
    border: 1px solid #b96c13;
    border-radius: 2px 2px 0 0;
    background: linear-gradient(#f6a42d, #ee9407 45%, #ffc73d);
}
.app-menu svg {
    width: 26px;
    height: 14px;
}
.tab-sep {
    width: 1px;
    margin: 0 4px;
    background: linear-gradient(#b5b8bd, #f0f0f0);
}
.tab-tools {
    display: flex;
    align-items: center;
    gap: 12px;
    margin-left: auto;
    padding-right: 5px;
}

/* ribbon */
.ribbon {
    display: flex;
    height: 89px;
    flex: none;
    background: linear-gradient(#fff 15%, #e3e6eb);
    border-bottom: 1px solid #85888e;
    box-shadow: 0 1px 3px #b9bdc6;
}
.group {
    display: flex;
    flex-direction: column;
    padding: 6px 5px 0 5px;
    border-right: 1px solid #c3c7ce;
}
.group-items {
    display: flex;
    flex: 1;
}
.group-items button {
    flex-direction: column;
    justify-content: flex-start;
    min-width: 42px;
    padding: 0 5px;
    line-height: 13px;
}
.group-items svg {
    width: 32px;
    height: 32px;
    margin-bottom: 5px;
}
.group-items .text-only {
    padding-top: 25px;
}
.menu::after {
    margin-top: 4px;
}
.group p {
    text-align: center;
    line-height: 16px;
    color: #6b7485;
}

/* desktop */
.desktop {
    display: flex;
    flex: 1;
    min-height: 0;
    padding: 4px 0 8px 2px;
}
.main-col {
    display: flex;
    flex-direction: column;
    flex: 1;
    min-width: 0;
}
.doc-tabs {
    display: flex;
    height: 23px;
    padding-left: 2px;
}
.doc-tab {
    display: flex;
    align-items: center;
    gap: 10px;
    padding: 0 5px 0 7px;
    border: 1px solid #a2a6ae;
    border-bottom: none;
    background: #fff;
}
.workspace {
    display: flex;
    flex-direction: column;
    flex: 1;
    border: 2px solid #a2a8b2;
    border-left-width: 1px;
    border-right-width: 1px;
    box-shadow: 1px 2px 3px #c4c8d0;
}
.dock {
    width: 32px;
    padding: 4px 0 0 8px;
}
.dock button {
    width: 24px;
    height: 76px;
    flex-direction: column;
    gap: 0;
    border: 1px solid #83878f;
    border-right: none;
    background: linear-gradient(90deg, #dfe3e8, #cfd5dd);
}
.dock span {
    writing-mode: vertical-rl;
}

/* toolbars */
.toolbar {
    display: flex;
    align-items: center;
    height: 30px;
    flex: none;
    color: #000;
    font-size: 13px;
}
.toolbar button {
    min-width: 24px;
    height: 27px;
}
.toolbar .pressed {
    border: 1px solid #a2a5ab;
    border-radius: 3px;
    background: linear-gradient(#fafbfc, #dcdfe5);
}
.toolbar .sep {
    width: 1px;
    height: 26px;
    margin: 0 2px 0 1px;
    background: #85888e;
}
.toolbar .wide {
    gap: 4px;
    padding: 0 5px 0 6px;
}
.toolbar .wide.tight {
    padding: 0 5px;
}
.toolbar .tight::after {
    margin-left: 0;
}
.toolbar .counter {
    padding: 0 9px 0 4px;
    color: #8f9196;
}
.layout-bar {
    display: flex;
    gap: 2px;
    height: 29px;
    flex: none;
    border-bottom: 1px solid #a2a8b2;
}
.bar-group {
    display: flex;
    align-items: center;
    gap: 2px;
    height: 28px;
    padding: 0 1px;
    border-right: 1px solid #b9bec7;
    background: linear-gradient(#fdfdfe, #e6e9ee);
}
.bar-group button {
    width: 24px;
    height: 24px;
}
.bar-group .on {
    border: 1px solid #c29a3a;
    border-radius: 3px;
    background: linear-gradient(#ffdf87, #ffd76b 50%, #ffe995);
}
.bar-group .bar-text {
    width: auto;
    padding: 0 6px;
}
.bar-text.drop::after {
    margin-left: 3px;
    border-top-color: #222;
}
.bar-label {
    padding: 0 8px;
}
.bar-sep {
    width: 1px;
    height: 20px;
    background: #c9cdd4;
}

/* grid */
.group-panel {
    padding: 12px 5px 8px;
}
.grid {
    width: 100%;
    table-layout: fixed;
    border-collapse: separate;
    border-spacing: 0;
    background: #fff;
}
.c-mark { width: 16px; }
.c-sel { width: 42px; }
.c-cod { width: 52px; }
.c-nome { width: 284px; }
.c-ativa { width: 71px; }
.c-sacado { width: 91px; }
.c-desc { width: 101px; }
.c-permite { width: 117px; }
.c-resp { width: 150px; }
.c-class { width: 81px; }
.grid th {
    height: 21px;
    padding: 0 3px;
    border: 1px solid #a2a8b2;
    border-left: none;
    background: linear-gradient(#f7f8fa, #eceef2);
    font-weight: normal;
    text-align: left;
    white-space: nowrap;
}
.grid td {
    height: 21px;
    padding: 0 3px;
    border-right: 1px solid #d0d6de;
    border-bottom: 1px solid #d0d6de;
    background: #eff7fe;
    color: #000;
}
.grid .center {
    text-align: center;
}
.grid .frozen {
    border-right: 2px solid #a2a8b2;
}
.grid .cod {
    background: #ececee;
}
.grid .rest {
    border-right: none;
}
.grid td.rest {
    background: #fff;
    border-bottom: none;
}
.grid td.mark {
    background: #f3f4f7;
}
.grid td.center input {
    display: block;
    margin: 0 auto;
}
.sorted {
    display: flex;
    justify-content: space-between;
    align-items: center;
    padding-right: 2px;
}
.sorted::after {
    content: "";
    border: 4px solid transparent;
    border-bottom-color: #222;
    border-top: none;
}
.row-mark {
    display: block;
    width: 0;
    margin-left: 3px;
    border: 4px solid transparent;
    border-left-color: #8b9099;
    border-right: none;
}
.grid-empty {
    flex: 1;
    background: #fff;
}
.grid-footer {
    display: flex;
    align-items: center;
    height: 24px;
    flex: none;
    border-top: 1px solid #a2a8b2;
    background: linear-gradient(#f7f8fa, #edf0f4);
}
.grid-footer span {
    width: 55px;
    padding-right: 5px;
    border-right: 1px solid #a2a8b2;
    text-align: right;
}

/* bottom tabs */
.bottom-tabs {
    display: flex;
    gap: 5px;
    height: 18px;
    flex: none;
    padding-left: 5px;
    overflow: hidden;
}
.bottom-tabs button {
    gap: 1px;
    height: 24px;
    padding: 0 6px;
    border: 1px solid #83878f;
    background: linear-gradient(#d9dde3, #cdd2da);
}

/* form controls */
input[type="checkbox"], input[type="radio"] {
    appearance: none;
    flex: none;
    width: 13px;
    height: 13px;
    margin: 0;
    border: 1px solid #8c8f94;
    background: linear-gradient(135deg, #c9ccd2, #f7f7f7 80%);
    box-shadow: inset 0 0 0 1px #f2f2f2, inset 0 0 0 2px #c6c8cc;
}
input[type="checkbox"]:checked::after {
    content: "";
    display: block;
    width: 4px;
    height: 8px;
    margin: 0 0 0 4px;
    border: solid #3c5aa0;
    border-width: 0 2px 2px 0;
    transform: rotate(35deg);
}
.grid input.dark:checked::after {
    border-color: #333;
}
input[type="radio"] {
    border-radius: 50%;
}
input[type="radio"]:checked {
    background: radial-gradient(circle at 40% 40%, #7fd0f2, #17608d 35%, #123f60 45%, #eef0f2 55%);
}
input[type="text"] {
    display: block;
    width: 100%;
    height: 20px;
    padding: 0 2px;
    border: 1px solid #dfe3e9;
    border-top-color: #a9adb3;
    border-radius: 1px;
    background: #fff;
    color: #000;
}
input[type="text"][readonly] {
    background: #f0f0f0;
    color: #45093f;
}
input[type="text"].short {
    width: 72px;
}
.select {
    position: relative;
}
.select::after {
    content: "";
    position: absolute;
    right: 4px;
    top: 9px;
    border: 4px solid transparent;
    border-top-color: #000;
    border-bottom: none;
    pointer-events: none;
}
select {
    display: block;
    appearance: none;
    width: 100%;
    height: 21px;
    padding: 0 3px;
    border: 1px solid #707070;
    border-radius: 3px;
    background: linear-gradient(#f3f3f3, #ebebeb 50%, #d3d3d3);
    box-shadow: inset 0 0 0 1px #f6f6f6;
    color: #000;
}
fieldset {
    min-width: 0;
    margin: 0;
    padding: 0 7px;
    border: 1px solid #d3dde6;
    border-radius: 4px;
}
legend {
    padding: 0 2px;
    color: #000;
}
.bold {
    font-weight: bold;
}
.check {
    display: flex;
    align-items: center;
    gap: 5px;
    white-space: nowrap;
}
.push {
    width: 73px;
    height: 21px;
    border: 1px solid #707070;
    border-radius: 3px;
    background: linear-gradient(#f4f5f7, #e8ebf0);
    box-shadow: inset 0 0 0 1px #fafafa, inset -2px -2px 0 #d3d6db;
    color: #333;
}
.push:disabled {
    border-color: #adb2b5;
    color: #5b6270;
}
.push.gray {
    width: 92px;
    background: linear-gradient(#f3f3f3, #ebebeb 50%, #cfcfcf);
}

/* windows */
.window {
    display: flex;
    flex-direction: column;
    background: #e8ebf0;
}
.window-title {
    display: flex;
    align-items: center;
    gap: 9px;
    flex: none;
}
.window-title h2 {
    flex: 1;
}
.window .toolbar {
    height: 36px;
    padding-bottom: 4px;
}
.tab-area {
    display: flex;
    flex-direction: column;
    flex: 1;
    padding: 2px 1px 1px 2px;
    background: #fff;
}
.tab-strip {
    display: flex;
    height: 22px;
}
.tab-strip::after {
    content: "";
    flex: 1;
    border-bottom: 1px solid #94979c;
}
.page-tab {
    width: 95px;
    border: 1px solid #94979c;
    border-bottom: none;
    border-radius: 4px 4px 0 0;
    color: #4b5568;
}
.page {
    flex: 1;
    border: 1px solid #94979c;
    border-top: none;
}
.actions {
    display: flex;
    justify-content: flex-end;
    gap: 8px;
    padding: 8px 1px 10px;
}
.window-bolsa {
    position: absolute;
    left: 95px;
    top: 307px;
    width: 658px;
    height: 623px;
    border: 3px solid #8b8f96;
}
.window-bolsa > .window-title {
    height: 24px;
    padding: 0 5px 0 4px;
    border-bottom: 1px solid #9a9da3;
    color: #6a6f7c;
}
.window-bolsa .tab-area {
    margin: 0 6px;
}
.window-bolsa .actions {
    padding-right: 7px;
}
.page-bolsa {
    padding: 5px 19px 0 11px;
}
.top-row {
    display: flex;
    justify-content: space-between;
    padding-left: 6px;
    height: 86px;
}
.ident {
    width: 300px;
}
.ident-row {
    display: flex;
    align-items: flex-end;
    gap: 16px;
    margin-bottom: 6px;
}
.ident-row .check {
    padding-bottom: 3px;
}
.antecipacao {
    width: 187px;
    height: 74px;
    padding: 2px 9px 0 5px;
}
.credito, .desconto {
    width: 400px;
    margin-left: 4px;
}
.credito {
    height: 65px;
}
.credito label {
    display: block;
    padding: 7px 0 1px;
}
.credito .select {
    width: 160px;
}
.desconto {
    height: 91px;
}
.tipo {
    display: flex;
    align-items: flex-start;
    gap: 18px;
    height: 39px;
    margin-top: 7px;
    padding: 6px 7px 0;
}
.desconto > .short {
    margin-top: 6px;
}
.page-bolsa .gray {
    margin: 23px 0 15px 5px;
}
.compoe {
    margin-left: 4px;
}
.custom {
    height: 99px;
    margin-top: 16px;
    padding: 1px 9px 0;
}
.custom legend {
    margin-left: -4px;
}
.custom label {
    display: block;
    margin-top: 5px;
}
.pair {
    display: grid;
    grid-template-columns: 60px 1fr;
    gap: 4px;
}

/* green frame drawn round the benefits window */
.highlight {
    position: absolute;
    left: 288px;
    top: 473px;
    padding: 1px 2px 3px;
    border: 5px solid #00ff00;
}
.window-benef {
    width: 497px;
    padding: 0 6px 6px;
    border: 1px solid #5f6470;
    box-shadow: inset 0 0 0 1px #fff;
    background: linear-gradient(#eceef1, #dfe2e7 30px, #e4e7eb);
}
.window-benef > .window-title {
    height: 29px;
    padding: 4px 8px 0 0;
}
.window-body {
    padding: 0 5px;
    border: 1px solid #83878e;
    background: #e8ebf0;
}
.window-benef .toolbar {
    margin-left: -7px;
    padding-left: 1px;
}
.window-benef .actions {
    padding-bottom: 8px;
}
.page-benef {
    padding: 16px 13px 13px;
}
.page-benef h3 {
    padding: 0 3px;
    font-weight: bold;
}
.checks {
    display: grid;
    grid-template-columns: 208px 1fr;
    grid-auto-rows: 21px;
    height: 86px;
    margin-top: 6px;
    padding: 4px 16px 0;
}
.checks legend {
    margin-left: -11px;
}
.checks + .checks {
    grid-template-rows: 21px 21px 21px 24px;
    height: 109px;
    margin-top: 7px;
}
```
